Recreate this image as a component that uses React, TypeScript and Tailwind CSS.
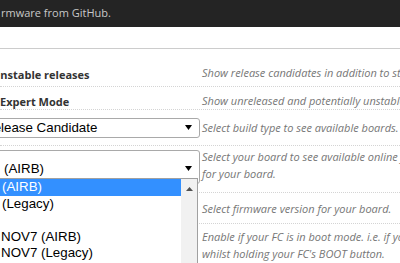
import type { ReactNode } from "react";

const arial = "font-['Liberation_Sans',Arial,sans-serif]";

function Down() {
  return (
    <svg width="7" height="5" viewBox="0 0 7 5" className="shrink-0">
      <path d="M0 0h7L3.5 5z" fill="#000" />
    </svg>
  );
}

function Up() {
  return (
    <svg width="7" height="4" viewBox="0 0 7 4">
      <path d="M0 4h7L3.5 0z" fill="#505050" />
    </svg>
  );
}

function Row({ cls, left, children }: { cls: string; left?: ReactNode; children: ReactNode }) {
  return (
    <div className={`flex border-b border-dotted border-[#d4d4d4] ${cls}`}>
      <div className="w-[200px] shrink-0">{left}</div>
      <div className="min-w-0 flex-1 whitespace-nowrap pl-[2px] text-[11px] italic leading-[17px] text-[#767676]">
        {children}
      </div>
    </div>
  );
}

export default function App() {
  const items = ["(AIRB)", "(Legacy)", "", "NOV7 (AIRB)", "NOV7 (Legacy)", "NOV7 (DSHOT)"];
  return (
    <div className="relative h-[263px] w-[400px] overflow-hidden bg-white font-['Open_Sans',sans-serif]">
      <div className="flex h-[27px] items-center bg-[#242424] pl-px text-[11px] text-[#c8c8c8]">
        rmware from GitHub.
      </div>
      <div className="h-[22px] border-b border-[#cccccc]" />

      <Row
        cls="h-[38px] items-center pt-[10px]"
        left={<span className="-ml-[8px] text-[11px] font-bold text-[#333]">Unstable releases</span>}
      >
        Show release candidates in addition to stable releases.
      </Row>
      <Row
        cls="h-[23px] items-center pt-[4px]"
        left={<span className="text-[11px] font-bold text-[#333]">Expert Mode</span>}
      >
        Show unreleased and potentially unstable firmware.
      </Row>
      <Row
        cls="h-[36px] items-center"
        left={
          <div className={`-ml-[21px] flex h-[20px] items-center rounded-[3px] border border-[#a9a9a9] pl-[4px] pr-[7px] text-[13.33px] text-black ${arial}`}>
            <span className="flex-1">Release Candidate</span>
            <Down />
          </div>
        }
      >
        Select build type to see available boards.
      </Row>
      <Row
        cls="h-[47px] items-start pt-[2px]"
        left={
          <div className={`-ml-[21px] mt-[2px] flex h-[34px] items-start rounded-[3px] border border-[#a9a9a9] pl-[24px] pr-[7px] pt-[8px] text-[13.33px] text-black ${arial}`}>
            <span className="flex-1">(AIRB)</span>
            <div className="flex self-stretch items-center pb-[6px]">
              <Down />
            </div>
          </div>
        }
      >
        Select your board to see available online firmware releases
        <br />
        for your board.
      </Row>
      <Row cls="h-[31px] items-center">Select firmware version for your board.</Row>
      <Row cls="h-[50px] items-start pt-[4px]">
        Enable if your FC is in boot mode. i.e. if you powered it on
        <br />
        whilst holding your FC&apos;s BOOT button.
      </Row>

      <div className={`absolute left-[-2px] top-[178px] flex h-[100px] w-[200px] border border-[#a0a0a0] bg-white text-[13.33px] text-black ${arial}`}>
        <div className="flex-1">
          {items.map((t, i) => (
            <div
              key={i}
              className={`flex h-[16.5px] items-center ${i === 0 ? "bg-[#3390ff] pl-[3px] text-white" : i > 2 ? "pl-[2px]" : "pl-[3px]"}`}
            >
              {t}
            </div>
          ))}
        </div>
        <div className="flex w-[16px] justify-center bg-[#f1f1f1] pt-[8px]">
          <Up />
        </div>
      </div>
    </div>
  );
}
